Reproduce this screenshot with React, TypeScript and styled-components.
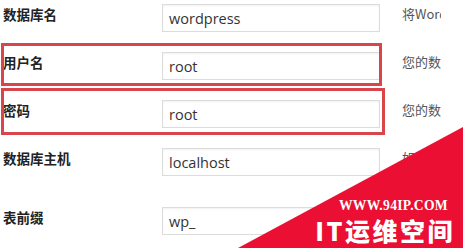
import React from "react";
import styled, { createGlobalStyle } from "styled-components";

const Global = createGlobalStyle`
  html, body { margin: 0; padding: 0; background: #fff; overflow: hidden; }
  body { width: 463px; height: 248px; }
`;

const Page = styled.div`
  position: relative;
  width: 463px;
  height: 248px;
  overflow: hidden;
  font-family: "Noto Sans CJK SC", "Noto Sans", sans-serif;
`;

const Form = styled.div`
  display: flex;
  flex-direction: column;
`;

const Row = styled.div<{ $h: number }>`
  display: grid;
  grid-template-columns: 162px 218px 61px;
  height: ${(p) => p.$h}px;
  padding-top: 4px;
  box-sizing: border-box;
  align-items: start;
`;

const Label = styled.div`
  padding-left: 3px;
  padding-top: 1px;
  font-size: 13.5px;
  line-height: 18px;
  font-weight: 600;
  color: #222;
  white-space: nowrap;
`;

const Field = styled.div`
  box-sizing: border-box;
  height: 28px;
  border: 1px solid #dcdcdc;
  box-shadow: inset 0 1px 2px rgba(0, 0, 0, 0.06);
  background: #fff;
  padding-left: 6px;
  font-family: "Open Sans", "Noto Sans", sans-serif;
  font-size: 14.5px;
  line-height: 28px;
  color: #333;
`;

const Desc = styled.div`
  padding-left: 22px;
  padding-top: 1px;
  font-size: 13px;
  line-height: 18px;
  color: #555;
  white-space: nowrap;
  overflow: hidden;
  font-family: "Noto Sans CJK SC", "Open Sans", sans-serif;
`;

const Highlight = styled.div<{ $l: number; $t: number; $w: number; $h: number }>`
  position: absolute;
  left: ${(p) => p.$l}px;
  top: ${(p) => p.$t}px;
  width: ${(p) => p.$w}px;
  height: ${(p) => p.$h}px;
  box-sizing: border-box;
  border: 3px solid #d8464c;
  pointer-events: none;
`;

const Corner = styled.div`
  position: absolute;
  right: 0;
  bottom: 0;
  width: 225px;
  height: 121px;
  background: #eb0f33;
  clip-path: polygon(0 100%, 100% 0, 100% 100%);
  display: flex;
  flex-direction: column;
  align-items: flex-end;
  justify-content: flex-end;
  padding: 0 10px 3px 0;
  box-sizing: border-box;
  color: #fff;
`;

const Site = styled.div`
  font-family: "Liberation Serif", "DejaVu Serif", serif;
  font-weight: 700;
  font-size: 13.6px;
  line-height: 15px;
  letter-spacing: 0.3px;
  margin-right: 5px;
  white-space: nowrap;
`;

const Brand = styled.div`
  margin-top: 2px;
  font-family: "Noto Sans CJK SC", sans-serif;
  font-weight: 900;
  font-size: 25px;
  line-height: 30px;
  letter-spacing: 2.5px;
  margin-right: -2px;
  white-space: nowrap;
`;

const rows = [
  { label: "数据库名", value: "wordpress", desc: "将WordPress安装到哪个数据库？", h: 48 },
  { label: "用户名", value: "root", desc: "您的数据库用户名。", h: 48 },
  { label: "密码", value: "root", desc: "您的数据库密码。", h: 48 },
  { label: "数据库主机", value: "localhost", desc: "如果localhost不能用，您通常可以从网站服务商处得到正确的信息。", h: 59 },
  { label: "表前缀", value: "wp_", desc: "如果您希望在同一个数据库安装多个WordPress，请修改这个字段。", h: 45 },
];

export default function App() {
  return (
    <Page>
      <Global />
      <Form>
        {rows.map((r) => (
          <Row key={r.label} $h={r.h}>
            <Label>{r.label}</Label>
            <Field>{r.value}</Field>
            <Desc>{r.desc}</Desc>
          </Row>
        ))}
      </Form>
      <Highlight $l={1} $t={43} $w={381} $h={43} />
      <Highlight $l={1} $t={88} $w={384} $h={47} />
      <Corner>
        <Site>WWW.94IP.COM</Site>
        <Brand>IT运维空间</Brand>
      </Corner>
    </Page>
  );
}
